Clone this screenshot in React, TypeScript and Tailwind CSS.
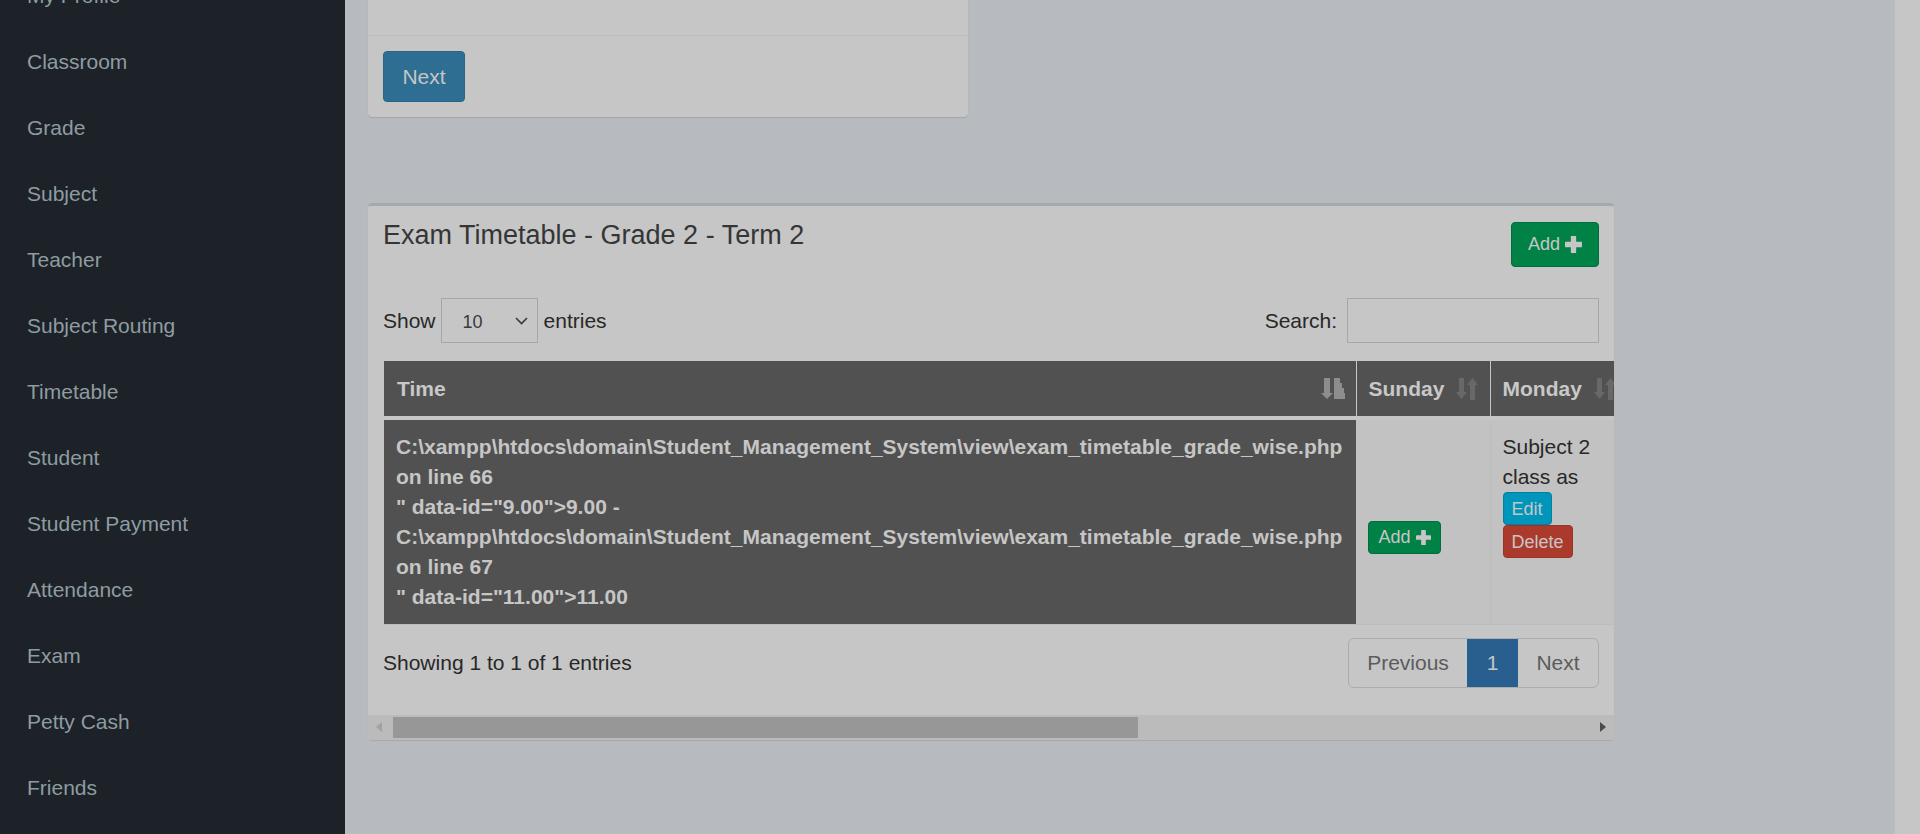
import React from 'react';

const menu = [
  'My Profile',
  'Classroom',
  'Grade',
  'Subject',
  'Teacher',
  'Subject Routing',
  'Timetable',
  'Student',
  'Student Payment',
  'Attendance',
  'Exam',
  'Petty Cash',
  'Friends',
];

const path = 'C:\\xampp\\htdocs\\domain\\Student_Management_System\\view\\exam_timetable_grade_wise.php';

const timeLines = [
  path,
  'on line 66',
  '" data-id="9.00">9.00 -',
  path,
  'on line 67',
  '" data-id="11.00">11.00',
];

const Plus = ({ size = 16 }: { size?: number }) => (
  <svg width={size} height={size} viewBox="0 0 16 16" fill="currentColor">
    <rect x="5.5" y="0" width="5" height="16" rx="0.5" />
    <rect x="0" y="5.5" width="16" height="5" rx="0.5" />
  </svg>
);

const SortAttr = () => (
  <svg width="24" height="22" viewBox="0 0 24 22" fill="currentColor">
    <rect x="3" y="0" width="6" height="16" />
    <polygon points="0,15 12,15 6,21" />
    <rect x="13" y="0" width="6" height="5" />
    <rect x="13" y="5" width="8" height="5" />
    <rect x="13" y="10" width="10" height="5" />
    <rect x="13" y="15" width="11" height="6" />
  </svg>
);

const SortBoth = () => (
  <svg width="22" height="22" viewBox="0 0 22 22" fill="currentColor">
    <rect x="3" y="0" width="5" height="15" />
    <polygon points="0,14 11,14 5.5,21" />
    <polygon points="11,7 22,7 16.5,0" />
    <rect x="14" y="6" width="5" height="16" />
  </svg>
);

const Sidebar = () => (
  <aside className="w-[345px] shrink-0 bg-[#1c2227] overflow-hidden">
    <ul className="mt-[-37px]">
      {menu.map((m) => (
        <li key={m} className="h-[66px] flex items-center pl-[27px] text-[21px] text-[#8e9ca2]">
          {m}
        </li>
      ))}
    </ul>
  </aside>
);

const days = ['Sunday', 'Monday', 'Tuesday', 'Wednesday', 'Thursday', 'Friday', 'Saturday'];

const TimetableBox = () => (
  <div className="w-[1246px] mt-[86px] bg-[#c6c6c6] border-t-[3px] border-[#a5a8ad] rounded-[4px] shadow-[0_1px_1px_rgba(0,0,0,0.1)]">
    {/* header */}
    <div className="h-[77px] px-[15px] pt-[16px] flex justify-between items-start">
      <h3 className="text-[27px] leading-[27px] text-[#353535]">Exam Timetable - Grade 2 - Term 2</h3>
      <button className="h-[45px] w-[88px] rounded-[4px] bg-[#008146] border border-[#006e3b] text-[#c6c6c6] text-[18px] flex items-center justify-center gap-[5px]">
        Add <Plus size={17} />
      </button>
    </div>

    {/* body */}
    <div className="px-[15px] pt-[15px] pb-[27px] overflow-hidden">
      <div className="h-[45px] flex justify-between items-center text-[21px] text-[#282828]">
        <div className="flex items-center">
          <span>Show</span>
          <div className="ml-[5px] mr-[6px] w-[97px] h-[45px] border border-[#a3a6ac] flex items-center justify-between pl-[21px] pr-[9px] text-[18px] text-[#3a3a3a]">
            <span className="pt-[3px]">10</span>
            <svg width="13" height="8" viewBox="0 0 13 8" fill="none" stroke="#3a3a3a" strokeWidth="1.6">
              <polyline points="1,1 6.5,6.5 12,1" />
            </svg>
          </div>
          <span>entries</span>
        </div>
        <div className="flex items-center">
          <span>Search:</span>
          <div className="ml-[10px] w-[252px] h-[45px] border border-[#a3a6ac]" />
        </div>
      </div>

      <table className="mt-[18px] ml-[1px] w-[2000px] border-collapse table-fixed text-[21px]">
        <colgroup>
          <col className="w-[972px]" />
          <col className="w-[134px]" />
          <col className="w-[138px]" />
          <col />
          <col />
          <col />
          <col />
          <col />
        </colgroup>
        <thead>
          <tr className="h-[57px] bg-[#515151] text-[#c8c8c8] font-bold border-b-[4px] border-[#c6c6c6]">
            <th className="text-left pl-[13px] pr-[12px] border-r border-[#c6c6c6]">
              <div className="flex items-center justify-between">
                <span>Time</span>
                <span className="text-[#8d8d8d] mr-[-1px]">
                  <SortAttr />
                </span>
              </div>
            </th>
            {days.map((d) => (
              <th key={d} className="text-left pl-[12px] pr-[12px] border-r border-[#c6c6c6]">
                <div className="flex items-center justify-between">
                  <span>{d}</span>
                  <span className="text-[#686868]">
                    <SortBoth />
                  </span>
                </div>
              </th>
            ))}
          </tr>
        </thead>
        <tbody>
          <tr className="h-[206px] border-b border-[#bdbdbd]">
            <td className="bg-[#515151] text-[#c6c6c6] font-bold align-top px-[12px] pt-[12px] leading-[30px]">
              {timeLines.map((l, i) => (
                <div key={i}>{l}</div>
              ))}
            </td>
            <td className="bg-[#c2c2c2] align-top px-[12px] pt-[101px] border-r border-[#bdbdbd]">
              <button className="h-[33px] w-[73px] rounded-[4px] bg-[#008146] border border-[#006e3b] text-[#c6c6c6] text-[18px] flex items-center justify-center gap-[5px]">
                Add <Plus size={15} />
              </button>
            </td>
            <td className="bg-[#c2c2c2] align-top px-[12px] pt-[12px] text-[#282828] leading-[30px] border-r border-[#bdbdbd]">
              <div>Subject 2</div>
              <div>class as</div>
              <button className="block h-[33px] w-[49px] rounded-[4px] bg-[#0095ba] border border-[#00819f] text-[#c6c6c6] text-[18px] leading-[18px]">
                Edit
              </button>
              <button className="block h-[33px] w-[70px] rounded-[4px] bg-[#ac3a2c] border border-[#9a3326] text-[#c6c6c6] text-[18px] leading-[18px]">
                Delete
              </button>
            </td>
            <td className="bg-[#c2c2c2] border-r border-[#bdbdbd]" />
            <td className="bg-[#c2c2c2] border-r border-[#bdbdbd]" />
            <td className="bg-[#c2c2c2] border-r border-[#bdbdbd]" />
            <td className="bg-[#c2c2c2] border-r border-[#bdbdbd]" />
            <td className="bg-[#c2c2c2]" />
          </tr>
        </tbody>
      </table>

      <div className="mt-[13px] h-[50px] flex justify-between items-center text-[21px]">
        <span className="text-[#282828]">Showing 1 to 1 of 1 entries</span>
        <div className="flex h-[50px] border border-[#acacac] rounded-[6px] overflow-hidden text-[#5c5c5c]">
          <div className="w-[118px] flex items-center justify-center">Previous</div>
          <div className="w-[51px] flex items-center justify-center bg-[#285f8e] text-[#c6c6c6]">1</div>
          <div className="w-[80px] flex items-center justify-center">Next</div>
        </div>
      </div>
    </div>

    {/* horizontal scrollbar */}
    <div className="h-[25px] bg-[#bbbbbb] flex items-center px-[8px]">
      <svg width="6" height="10" viewBox="0 0 6 10" fill="#a2a2a2">
        <polygon points="6,0 0,5 6,10" />
      </svg>
      <div className="ml-[11px] w-[745px] h-[21px] bg-[#979797]" />
      <div className="flex-1" />
      <svg width="6" height="10" viewBox="0 0 6 10" fill="#4a4a4a">
        <polygon points="0,0 6,5 0,10" />
      </svg>
    </div>
  </div>
);

export default function App() {
  return (
    <div className="flex w-[1920px] h-[834px] overflow-hidden font-['Liberation_Sans',Arial,sans-serif]">
      <Sidebar />
      <main className="flex-1 bg-[#b7babf] pl-[23px] overflow-hidden">
        {/* previous step box (scrolled up) */}
        <div className="w-[600px] mt-[-164px] bg-[#c6c6c6] rounded-[4px] shadow-[0_1px_1px_rgba(0,0,0,0.12)]">
          <div className="h-[200px] border-b border-[#bdbdbd]" />
          <div className="px-[15px] pt-[15px] pb-[15px]">
            <button className="h-[51px] w-[82px] rounded-[4px] bg-[#2e6e92] border border-[#2a6383] text-[#c6c6c6] text-[21px]">
              Next
            </button>
          </div>
        </div>
        <TimetableBox />
      </main>
      <div className="w-[25px] bg-[#c6c6c6]" />
    </div>
  );
}
